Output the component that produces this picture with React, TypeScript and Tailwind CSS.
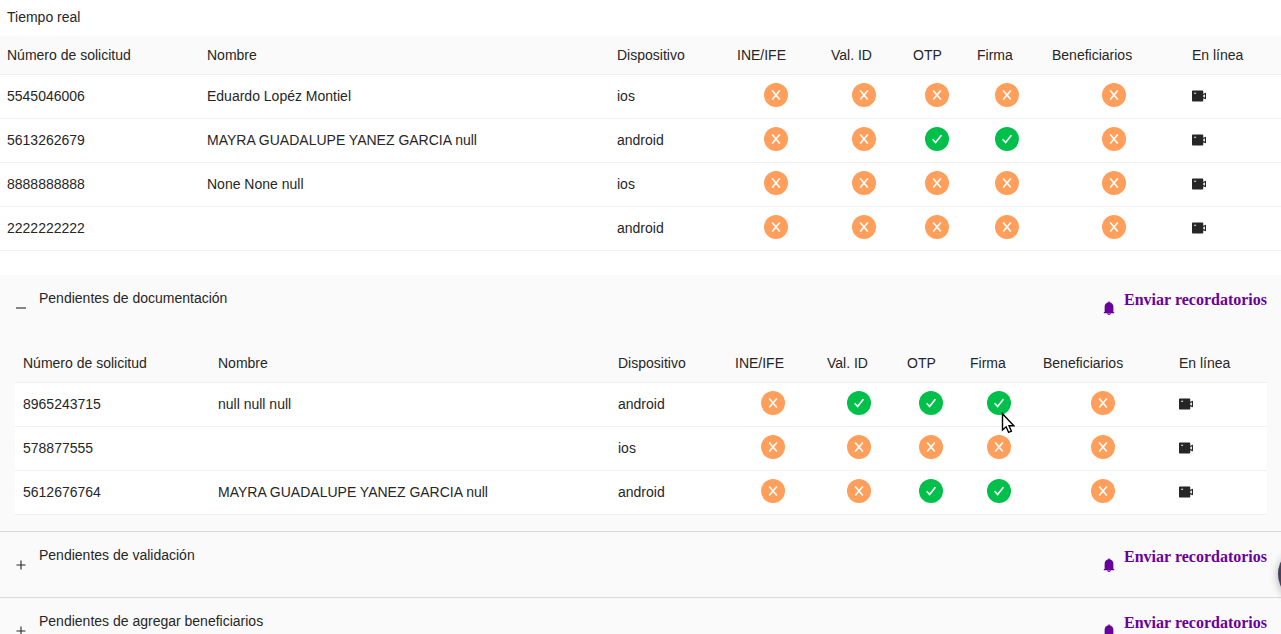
import { useState } from "react";
import { AiFillBell, AiFillVideoCamera } from "react-icons/ai";

type Row = {
  id: string;
  name: string;
  device: string;
  checks: boolean[];
};

const liveRows: Row[] = [
  { id: "5545046006", name: "Eduardo Lopéz Montiel", device: "ios", checks: [false, false, false, false, false] },
  { id: "5613262679", name: "MAYRA GUADALUPE YANEZ GARCIA null", device: "android", checks: [false, false, true, true, false] },
  { id: "8888888888", name: "None None null", device: "ios", checks: [false, false, false, false, false] },
  { id: "2222222222", name: "", device: "android", checks: [false, false, false, false, false] },
];

const pendingRows: Row[] = [
  { id: "8965243715", name: "null null null", device: "android", checks: [false, true, true, true, false] },
  { id: "578877555", name: "", device: "ios", checks: [false, false, false, false, false] },
  { id: "5612676764", name: "MAYRA GUADALUPE YANEZ GARCIA null", device: "android", checks: [false, false, true, true, false] },
];

const headings = [
  "Número de solicitud",
  "Nombre",
  "Dispositivo",
  "INE/IFE",
  "Val. ID",
  "OTP",
  "Firma",
  "Beneficiarios",
  "En línea",
];

const wideColumns = [
  "w-[199px]",
  "w-[410px]",
  "w-[120px]",
  "w-[94px]",
  "w-[82px]",
  "w-[64px]",
  "w-[75px]",
  "w-[140px]",
  "w-auto",
];

const narrowColumns = [
  "w-[195px]",
  "w-[400px]",
  "w-[117px]",
  "w-[92px]",
  "w-[80px]",
  "w-[63px]",
  "w-[73px]",
  "w-[136px]",
  "w-auto",
];

// The icon glyphs are drawn without the outer 64-unit margin.
const iconBox = "64 64 896 896";

const strokes = {
  check: "M1.6 6.3L4.6 9.6L10.4 2.2",
  close: "M2.2 1.4L9.8 10.6M9.8 1.4L2.2 10.6",
  minus: "M1 6H11",
  plus: "M1.5 6H10.5M6 1.5V10.5",
};

function StrokeIcon({ name, weight }: { name: keyof typeof strokes; weight: number }) {
  return (
    <svg viewBox="0 0 12 12" width="12" height="12" fill="none" stroke="currentColor" strokeWidth={weight} aria-hidden="true">
      <path d={strokes[name]} />
    </svg>
  );
}

function Status({ ok }: { ok: boolean }) {
  return (
    <span
      role="img"
      aria-label={ok ? "Completo" : "Incompleto"}
      className={`mx-auto flex size-6 items-center justify-center rounded-full text-white ${ok ? "bg-[#00c04b]" : "bg-[#ff9f5b]"}`}
    >
      <StrokeIcon name={ok ? "check" : "close"} weight={1.6} />
    </span>
  );
}

function RequestTable({ rows, columns, label, edge }: { rows: Row[]; columns: string[]; label: string; edge?: boolean }) {
  const first = edge ? "pl-[7px]" : "pl-2";
  const border = "border-b border-[#f0f0f0] pr-2";
  const cell = `${border} pt-[10px] align-top`;
  return (
    <table aria-label={label} className="w-full table-fixed border-separate border-spacing-0 text-left">
      <colgroup>
        {columns.map((width, i) => (
          <col key={i} className={width} />
        ))}
      </colgroup>
      <thead className="bg-[#fafafa]">
        <tr>
          {headings.map((heading, i) => (
            <th key={heading} scope="col" className={`h-[39px] whitespace-nowrap font-normal ${border} ${i === 0 ? first : "pl-2"}`}>
              {heading}
            </th>
          ))}
        </tr>
      </thead>
      <tbody className="bg-white">
        {rows.map((row) => (
          <tr key={row.id} className="h-11">
            <td className={`${cell} ${first}`}>{row.id}</td>
            <td className={`${cell} pl-2`}>{row.name}</td>
            <td className={`${cell} pl-2`}>{row.device}</td>
            {row.checks.map((ok, i) => (
              <td key={i} className={`${border} pt-2 pl-2 align-top`}>
                <Status ok={ok} />
              </td>
            ))}
            <td className={`${border} pt-[14px] pl-2 align-top`}>
              <button type="button" aria-label="Videollamada" className="block text-[#262626]">
                <AiFillVideoCamera size={14} viewBox={iconBox} />
              </button>
            </td>
          </tr>
        ))}
      </tbody>
    </table>
  );
}

function Panel({ title, initiallyOpen, rows }: { title: string; initiallyOpen?: boolean; rows?: Row[] }) {
  const [open, setOpen] = useState(Boolean(initiallyOpen));
  return (
    <section className="border-b border-[#d9d9d9] bg-[#fafafa]">
      <div className="flex h-[65px] items-start justify-between px-[14px] pt-3">
        <button type="button" aria-expanded={open} onClick={() => setOpen(!open)} className="flex items-start text-left">
          <span className="mt-[15px] mr-3 ml-px">
            <StrokeIcon name={open ? "minus" : "plus"} weight={1.1} />
          </span>
          {title}
        </button>
        <button type="button" className="flex items-start gap-2 font-['Liberation_Serif',serif] text-base leading-[26px] font-bold text-[#6a009b]">
          <AiFillBell size={14} viewBox={iconBox} className="mt-[14px]" />
          Enviar recordatorios
        </button>
      </div>
      {open && rows && (
        <div className="pt-1 pr-[14px] pb-4 pl-[15px]">
          <RequestTable rows={rows} columns={narrowColumns} label={title} />
        </div>
      )}
    </section>
  );
}

export default function App() {
  return (
    <main className="relative h-screen overflow-hidden bg-white font-['Liberation_Sans',Arial,sans-serif] text-sm leading-[22px] text-[#262626]">
      <h1 className="px-[7px] pt-[6px] pb-2">Tiempo real</h1>
      <RequestTable rows={liveRows} columns={wideColumns} label="Tiempo real" edge />
      <div className="mt-6">
        <Panel title="Pendientes de documentación" initiallyOpen rows={pendingRows} />
        <Panel title="Pendientes de validación" />
        <Panel title="Pendientes de agregar beneficiarios" />
      </div>
      <button
        type="button"
        aria-label="Ayuda"
        className="absolute right-[-53px] bottom-8 size-14 rounded-full bg-[#46405a] shadow-[0_2px_8px_rgba(0,0,0,0.3)]"
      />
      <svg aria-hidden="true" viewBox="0 0 14 22" className="pointer-events-none absolute top-[412px] left-[1001px] h-[22px] w-[14px]">
        <path d="M1.5 1.8v16.2l3.6-3.2 2.5 5.6 2.8-1.2-2.4-5.4h4.8z" fill="#fff" stroke="#000" strokeWidth="1.4" />
      </svg>
    </main>
  );
}
